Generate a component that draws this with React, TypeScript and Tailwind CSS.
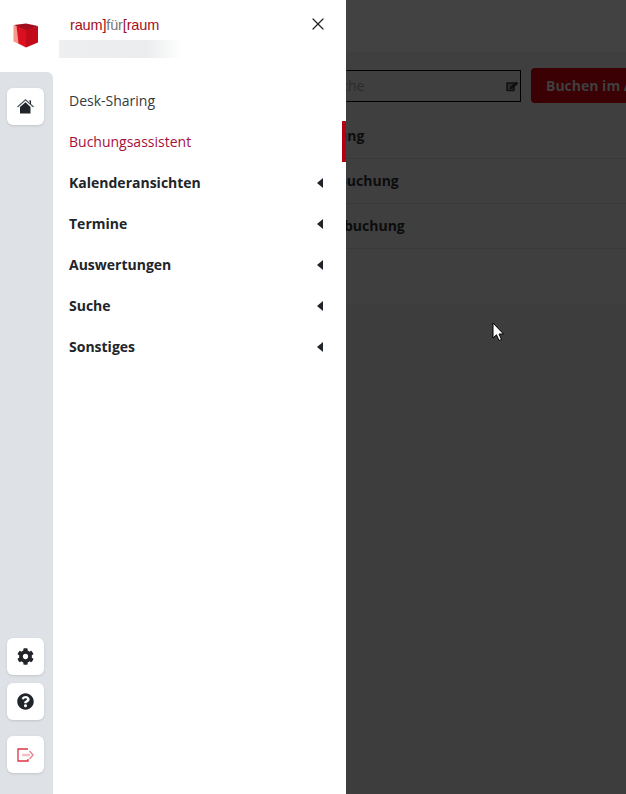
import { X } from "lucide-react"
import { FaCog, FaQuestionCircle } from "react-icons/fa"

const font = { fontFamily: '"Open Sans", sans-serif' }

const groups = ["Kalenderansichten", "Termine", "Auswertungen", "Suche", "Sonstiges"]

const RailButton = ({ children, className = "" }: { children: React.ReactNode; className?: string }) => (
	<div className={`flex h-[37px] w-[37px] items-center justify-center rounded-[6px] bg-white shadow-sm ${className}`}>{children}</div>
)

const CubeLogo = () => (
	<svg width="25" height="25" viewBox="0 0 25 25">
		<path d="M1 2 L13 0.5 L25 3 L13 8 Z" fill="#a00d1c" />
		<path d="M0.5 2 L4 3.5 L6 20.5 L13 24.5 L0.5 18.5 Z" fill="#f29a8e" />
		<path d="M3.5 3 L13 7 L13 24.5 L5.5 20.5 Z" fill="#dc0f20" />
		<path d="M13 7 L25 3 L25 19.5 L13 24.5 Z" fill="#c10b1a" />
	</svg>
)

const HomeIcon = () => (
	<svg width="17" height="15" viewBox="0 0 17 15" fill="none">
		<path d="M0.5 8 L8.5 0.8 L16.5 8" stroke="#4a5560" strokeWidth="1.2" />
		<path d="M12 2 H13.5 V5" stroke="#212529" strokeWidth="1.1" />
		<path d="M3 8 L8.5 3.2 L13.5 8 V14.5 H3 Z" fill="#212529" />
	</svg>
)

const LogoutIcon = () => (
	<svg width="17" height="14" viewBox="0 0 17 14" fill="none">
		<path d="M11 1 H1 V13 H11 V11" stroke="#dc3545" strokeWidth="1.3" />
		<path d="M5 7 H13" stroke="#f2bcc2" strokeWidth="2.4" />
		<path d="M12.5 3 L16 7 L12.5 11" stroke="#e9838d" strokeWidth="1.4" />
	</svg>
)

const App = () => {
	return (
		<div className="flex h-[794px] w-[626px] overflow-hidden bg-[#3c3d3c]" style={font}>
			<aside className="relative z-10 flex w-[346px] shrink-0 bg-white">
				<div className="flex w-[53px] shrink-0 flex-col">
					<div className="flex h-[72px] items-center justify-center bg-white pr-[3px] pb-[2px]">
						<CubeLogo />
					</div>
					<div className="flex flex-1 flex-col items-center rounded-tr-[6px] bg-[#dee2e6] pb-[21px] pr-[2px] pt-[16px]">
						<RailButton>
							<HomeIcon />
						</RailButton>
						<RailButton className="mt-auto">
							<FaCog size={17} className="text-[#212529]" />
						</RailButton>
						<RailButton className="mt-[8px]">
							<FaQuestionCircle size={17} className="text-[#212529]" />
						</RailButton>
						<RailButton className="mt-[16px]">
							<LogoutIcon />
						</RailButton>
					</div>
				</div>

				<div className="min-w-0 flex-1">
					<div className="relative h-[80px]">
						<div className="pl-[17px] pt-[15px] text-[14.5px] leading-[20px] tracking-[-0.15px] text-[#a50f1c]" style={{ fontFamily: '"Liberation Sans", sans-serif' }}>
							raum]<span className="text-[#777777]">für</span>[raum
						</div>
						<div className="ml-[6px] mt-[5px] h-[18px] w-[123px] bg-gradient-to-r from-[#eeeff0] via-[#ebeced] via-70% to-white" />
						<X size={20} strokeWidth={1.5} className="absolute left-[255px] top-[14px] text-[#212529]" />
					</div>
					<nav className="pl-[16px] pr-[23px] text-[14px]">
						<div className="flex h-[41px] items-center text-[#343a40]">Desk-Sharing</div>
						<div className="flex h-[41px] items-center text-[#a50f3c]">Buchungsassistent</div>
						{groups.map((label) => (
							<div key={label} className="flex h-[41px] items-center justify-between font-bold text-[#212529]">
								<span>{label}</span>
								<span className="h-0 w-0 border-y-[5px] border-r-[6px] border-y-transparent border-r-[#212529]" />
							</div>
						))}
					</nav>
				</div>

				<div className="absolute right-0 top-[121px] h-[41px] w-[4px] bg-[#b30012]" />
			</aside>

			<main className="relative min-w-0 flex-1">
				<div className="h-[52px] bg-[#424242]" />
				<div className="h-[252px] bg-[#3f3f3f]">
					<div className="flex h-[62px] items-start pt-[16px]">
						<div className="mt-[2px] flex h-[32px] w-[175px] shrink-0 items-center justify-between border border-y-black border-r-black border-l-transparent pb-[2px] pr-[1px] text-[14px] text-[#2c2c2c]">
							<span className="-ml-[22px]">Suche</span>
							<svg className="mt-[2px]" width="13" height="11" viewBox="0 0 13 11" fill="none">
								<path d="M1 2 H8 V9.5 H1 Z" fill="#2c2c2c" stroke="#111" strokeWidth="1.5" strokeLinejoin="round" />
								<path d="M3.5 8 L4 5.8 L10 0.5 L12.5 2.5 L6 8 Z" fill="#111" />
							</svg>
						</div>
						<div className="ml-[10px] flex h-[35px] flex-1 items-center overflow-hidden whitespace-nowrap rounded-l-[4px] bg-[#3a0004] pl-[15px] text-[14px] font-bold text-[#3f3f3f]">
							Buchen im A
						</div>
					</div>
					<div className="flex h-[45px] items-center border-b border-[#383938] pb-[2px] text-[14px] font-bold text-[#0c0c0c]">
						<span className="-ml-[8px]">ung</span>
					</div>
					<div className="flex h-[45px] items-center border-b border-[#383938] pb-[2px] text-[14px] font-bold text-[#0c0c0c]">
						<span className="-ml-[8px]">buchung</span>
					</div>
					<div className="flex h-[45px] items-center border-b border-[#383938] pb-[2px] text-[14px] font-bold text-[#0c0c0c]">
						<span className="-ml-[2px]">buchung</span>
					</div>
				</div>
				<svg className="absolute left-[146px] top-[322px]" width="13" height="20" viewBox="0 0 13 20">
					<path d="M1 1 V16 L4.5 12.8 L7 18.5 L9.5 17.4 L7 12 H11.5 Z" fill="#fff" stroke="#000" strokeWidth="1" />
				</svg>
			</main>
		</div>
	)
}

export default App
